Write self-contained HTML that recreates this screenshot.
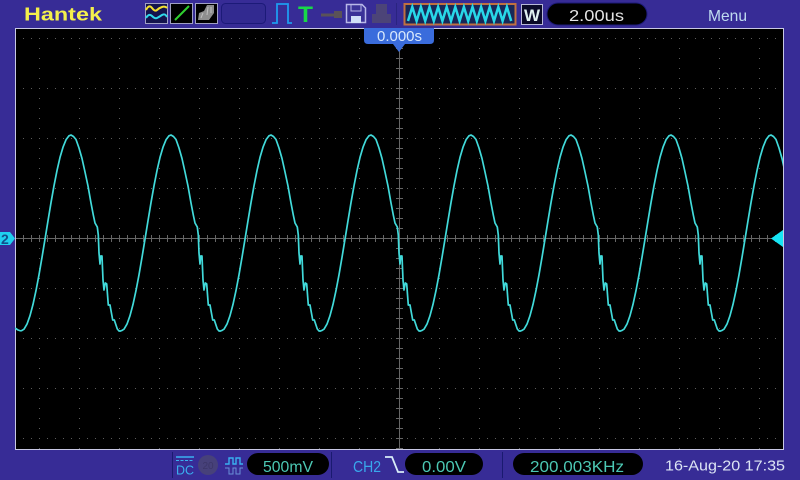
<!DOCTYPE html>
<html><head><meta charset="utf-8">
<style>
html,body{margin:0;padding:0;background:#372c96}
body{width:800px;height:480px;overflow:hidden;position:relative;font-family:"Liberation Sans",sans-serif}
svg{position:absolute;left:0;top:0;display:block}
text{font-family:"Liberation Sans",sans-serif}
</style></head><body>
<svg width="800" height="480" viewBox="0 0 800 480" xmlns="http://www.w3.org/2000/svg">
<defs>
<pattern id="hd" x="15" y="38" width="8" height="50" patternUnits="userSpaceOnUse"><rect x="0" y="0" width="1" height="1" fill="#5c5c5c"/></pattern>
<pattern id="vd" x="39" y="28" width="40" height="10" patternUnits="userSpaceOnUse"><rect x="0" y="0" width="1" height="1" fill="#5c5c5c"/></pattern>
<pattern id="ht" x="15" y="0" width="8" height="10" patternUnits="userSpaceOnUse"><rect x="0" y="0" width="1" height="10" fill="#666"/></pattern>
<pattern id="vt" x="0" y="28" width="10" height="10" patternUnits="userSpaceOnUse"><rect x="0" y="0" width="10" height="1" fill="#666"/></pattern>
<clipPath id="scr"><rect x="15" y="29" width="768" height="420"/></clipPath>
<path id="p" d="M21 331L24 329.2L27 324.1L30 315.7L33 304.4L36 290.6L39 274.8L42 257.4L45 239.2L48 220.8L51 202.7L54 185.8L57 170.6L60 157.4L63 147.2L66 139.8L69 135.8L71 135L73.5 136.500L76 139.5L79 148L82 158.5L85 172L88 186L91 203L93.3 215L95 223L97.3 227L98.3 235L99 253L100 264L100.7 256L102 256L103 280L104 290L105.3 283L106.7 284L108.3 305L110 305L112.7 320L114.3 320L117.3 329L119 331L121 331"/>
</defs>
<!-- screen -->
<rect x="15" y="28" width="769" height="422" fill="#000"/>
<rect x="15" y="28" width="769" height="1" fill="#c8c8e4"/>
<rect x="15" y="449" width="769" height="1" fill="#c8c8e4"/>
<rect x="15" y="28" width="1" height="422" fill="#c8c8e4"/>
<rect x="783" y="28" width="1" height="422" fill="#c8c8e4"/>
<!-- grid -->
<rect x="16" y="29" width="767" height="420" fill="url(#hd)"/>
<rect x="16" y="29" width="767" height="420" fill="url(#vd)"/>
<rect x="16" y="238" width="767" height="1" fill="#666"/>
<rect x="399" y="29" width="1" height="420" fill="#666"/>
<rect x="16" y="235" width="767" height="7" fill="url(#ht)"/>
<rect x="396" y="29" width="7" height="420" fill="url(#vt)"/>
<!-- trace -->
<g clip-path="url(#scr)" fill="none" stroke="#41dada" stroke-width="1.7" stroke-linejoin="round">
<path d="M15 328L18 330L21 331"/>
<use href="#p"/><use href="#p" x="100"/><use href="#p" x="200"/><use href="#p" x="300"/>
<use href="#p" x="400"/><use href="#p" x="500"/><use href="#p" x="600"/><use href="#p" x="700"/>
</g>
<!-- ch markers -->
<path d="M0 232H10L15 238.5L10 245H0Z" fill="#1fd0f0"/>
<text x="1" y="244" font-size="14" font-weight="bold" fill="#12508c">2</text>
<path d="M771 238.5L783 230V247Z" fill="#16e4f4"/>
<!-- time marker -->
<path d="M364 28H434V40Q434 44 430 44H405L399 52L393 44H368Q364 44 364 40Z" fill="#3a6cdc"/>
<text x="377" y="41" font-size="15" fill="#d8e8fc" textLength="45" lengthAdjust="spacingAndGlyphs">0.000s</text>
<!-- top bar -->
<text x="24" y="20.500" font-size="18" font-weight="bold" fill="#f4f04c" textLength="78" lengthAdjust="spacingAndGlyphs">Hantek</text>
<rect x="145.500" y="3.500" width="22" height="20" fill="#14144c" stroke="#a0a0c4"/>
<path d="M146 10q3-6 6-2t5 2t5-3t5 1" fill="none" stroke="#f4e030" stroke-width="2"/>
<path d="M146 18q3-5 6-2t5 2t5-3t5 2" fill="none" stroke="#30d8e8" stroke-width="2"/>
<rect x="170.500" y="3.500" width="22" height="20" fill="#000" stroke="#a0a0c4"/>
<path d="M175 20L189 6" stroke="#30d030" stroke-width="2"/>
<rect x="195.500" y="3.500" width="22" height="20" fill="#000" stroke="#a0a0c4"/>
<path d="M198 20L199 13L204 11L207 5H214L214 13L209 20Z" fill="#8e8e8e"/>
<path d="M201 18L203 13M208 7L207 15M211 7L211 13" stroke="#c0c0c0" stroke-width="1" fill="none"/>
<rect x="221.500" y="3.500" width="44" height="20" rx="4" fill="#322a90" stroke="#1c1a78"/>
<path d="M272 23H277V4H288V23H292" fill="none" stroke="#1e9cf0" stroke-width="1.800"/>
<text x="298" y="22" font-size="22" font-weight="bold" fill="#18d848" textLength="15" lengthAdjust="spacingAndGlyphs">T</text>
<path d="M321 13.500H334V11H342V18H334V16.500H321Z" fill="#5a5258"/>
<path d="M346.500 4.500H362L365.500 8V22.500H346.500Z" fill="#3a3298" stroke="#b8b8e8" stroke-width="1.500"/>
<path d="M351 5V11H361V5" fill="none" stroke="#b8b8e8"/><rect x="351" y="16" width="10" height="7" fill="#d0e0f8"/>
<path d="M376 4H387V14H391V23H372V14H376Z" fill="#4c4478"/>
<rect x="396" y="3" width="1" height="22" fill="#2a2480"/>
<!-- time base -->
<rect x="404.500" y="4" width="111" height="20.500" fill="#182858" stroke="#c07040" stroke-width="2"/>
<path d="M408 21L412.300 7L416.600 21L420.900 7L425.200 21L429.500 7L433.800 21L438.100 7L442.400 21L446.700 7L451 21L455.300 7L459.600 21L463.900 7L468.200 21L472.500 7L476.800 21L481.100 7L485.400 21L489.700 7L494 21L498.300 7L502.600 21L506.900 7L511.200 21" fill="none" stroke="#28d8e8" stroke-width="2.500"/>
<rect x="521.500" y="4.500" width="21" height="20" fill="#0a0a28" stroke="#b8b8d8"/>
<text x="532" y="21" font-size="17" font-weight="bold" fill="#e0f0f0" text-anchor="middle">W</text>
<rect x="547" y="3" width="100" height="22" rx="11" fill="#000" stroke="#1c1a78"/>
<text x="569" y="21" font-size="16" fill="#e4e4e4" textLength="55" lengthAdjust="spacingAndGlyphs">2.00us</text>
<text x="708" y="21" font-size="16" fill="#c0dcf0" textLength="39" lengthAdjust="spacingAndGlyphs">Menu</text>
<!-- bottom bar -->
<rect x="172" y="452" width="1" height="26" fill="#1a1a70"/>
<rect x="331" y="452" width="1" height="26" fill="#1a1a70"/>
<rect x="502" y="452" width="1" height="26" fill="#1a1a70"/>
<path d="M176 457H194" stroke="#3ab0f0" stroke-width="1.500"/>
<path d="M176 460.500H194" stroke="#3ab0f0" stroke-dasharray="3 1.500"/>
<text x="176" y="474.500" font-size="13" fill="#3ab0f0" textLength="18" lengthAdjust="spacingAndGlyphs">DC</text>
<circle cx="208" cy="465" r="10" fill="#47417a"/>
<text x="208" y="469" font-size="10" fill="#3c3668" text-anchor="middle">20</text>
<path d="M225 464H229V458H233V464H236V458H240V464H243" fill="none" stroke="#38b0f0" stroke-width="1.400"/>
<path d="M225 468H229V474H233V468H236V474H240V468H243" fill="none" stroke="#6a90d8" stroke-width="1"/>
<rect x="247" y="453" width="82" height="22" rx="11" fill="#000"/>
<text x="263" y="472" font-size="16" fill="#4cc8b4" textLength="50" lengthAdjust="spacingAndGlyphs">500mV</text>
<text x="353" y="472" font-size="16" fill="#38a8ec" textLength="28" lengthAdjust="spacingAndGlyphs">CH2</text>
<path d="M385 457H392L398 472H404" fill="none" stroke="#d8ecf8" stroke-width="1.800"/>
<rect x="405" y="453" width="78" height="22" rx="11" fill="#000"/>
<text x="422" y="472" font-size="16" fill="#4cc8b4" textLength="44" lengthAdjust="spacingAndGlyphs">0.00V</text>
<rect x="513" y="453" width="130" height="22" rx="11" fill="#000"/>
<text x="530" y="472" font-size="16" fill="#4cc8b4" textLength="94" lengthAdjust="spacingAndGlyphs">200.003KHz</text>
<text x="665" y="470.500" font-size="15" fill="#dce4f4" textLength="120" lengthAdjust="spacingAndGlyphs">16-Aug-20 17:35</text>
</svg>
</body></html>
